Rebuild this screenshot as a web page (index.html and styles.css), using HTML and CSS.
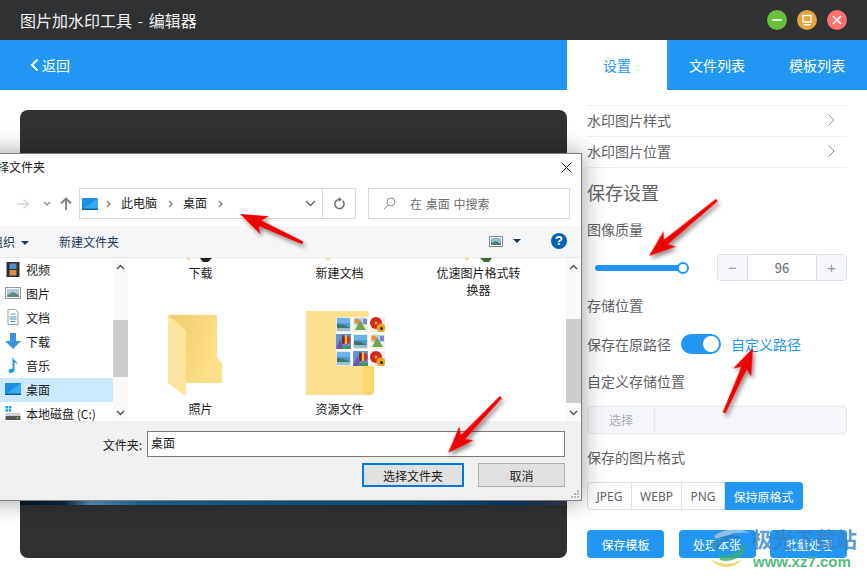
FILE: index.html
```html
<!DOCTYPE html>
<html lang="zh">
<head>
    <meta charset="utf-8">
    <title>图片加水印工具 - 编辑器</title>
    <link rel="stylesheet" href="styles.css">
</head>
<body>
    <svg class="defs" width="0" height="0">
        <defs>
            <linearGradient id="folder-back" x1="0" y1="0" x2="1" y2="0.4">
                <stop offset="0" stop-color="#efcb6c"/>
                <stop offset="1" stop-color="#fde08a"/>
            </linearGradient>
        </defs>
        <symbol id="pic-lake" viewBox="0 0 15 15">
            <rect width="15" height="15" fill="#e4e8ea"/>
            <rect x="1" y="1" width="13" height="13" fill="#4c9bd8"/>
            <rect x="1" y="1" width="13" height="5" fill="#6fb4e6"/>
            <path d="M1 7 L8 8 L14 11 V14 H1Z" fill="#3f7466"/>
            <rect x="1" y="11" width="13" height="3" fill="#9cc2cc"/>
        </symbol>
        <symbol id="pic-hill" viewBox="0 0 15 15">
            <rect width="15" height="15" fill="#f4f2d8"/>
            <rect x="1" y="1" width="13" height="7" fill="#a9d6ee"/>
            <path d="M2 13 L7 3 L13 13Z" fill="#6fa552"/>
            <circle cx="4" cy="4" r="2.5" fill="#ee8b2c"/>
            <rect x="10" y="2" width="4" height="5" fill="#8b7fd0"/>
        </symbol>
        <symbol id="pic-flower" viewBox="0 0 15 15">
            <rect width="15" height="15" fill="#f1efe6"/>
            <circle cx="6" cy="6" r="6" fill="#cf2b1c"/>
            <circle cx="6" cy="6" r="1.5" fill="#e8a33a"/>
            <circle cx="11" cy="11" r="4.5" fill="#f0a01e"/>
            <circle cx="11.5" cy="11.5" r="1.5" fill="#222"/>
        </symbol>
        <symbol id="pic-balloon" viewBox="0 0 15 15">
            <rect width="15" height="15" fill="#5e97d6"/>
            <circle cx="10" cy="6" r="4.5" fill="#c9332c"/>
            <rect x="9" y="1" width="2" height="9" fill="#f1c232"/>
            <rect x="6.5" y="1" width="1" height="9" fill="#222"/>
            <path d="M0 15 L4 5 L8 15Z" fill="#7a4fb5"/>
            <rect x="6" y="12" width="9" height="3" fill="#3c9a5f"/>
        </symbol>
    </svg>

    <div class="app">
        <div class="titlebar">
            <span class="app-title">图片加水印工具 - 编辑器</span>
            <div class="win-btns">
                <span class="win-btn win-min"><svg width="12" height="12" viewBox="0 0 12 12"><rect x="1" y="5" width="10" height="2" rx="1" fill="#fff" opacity=".85"/></svg></span>
                <span class="win-btn win-max"><svg width="12" height="12" viewBox="0 0 12 12"><rect x="2" y="1.5" width="8" height="6.5" fill="none" stroke="#fff" stroke-width="1.4"/><rect x="2.5" y="10" width="7" height="1.4" fill="#fff"/></svg></span>
                <span class="win-btn win-close"><svg width="12" height="12" viewBox="0 0 12 12"><path d="M2 2 L10 10 M10 2 L2 10" stroke="#fff" stroke-width="1.6"/></svg></span>
            </div>
        </div>

        <div class="topbar">
            <a class="back">
                <svg width="9" height="14" viewBox="0 0 9 14"><path d="M7.5 1.5 L2 7 L7.5 12.5" fill="none" stroke="#fff" stroke-width="2"/></svg>
                返回
            </a>
            <div class="tabs">
                <span class="tab tab-active">设置</span>
                <span class="tab">文件列表</span>
                <span class="tab">模板列表</span>
            </div>
        </div>

        <div class="main">
            <div class="canvas-wrap">
                <div class="canvas">
                    <div class="canvas-img"></div>
                </div>
            </div>

            <div class="panel">
                <div class="fold-row">水印图片样式
                    <svg width="7" height="12" viewBox="0 0 7 12"><path d="M.5 .5 L6 6 L.5 11.5" fill="none" stroke="#909399" stroke-width="1"/></svg>
                </div>
                <div class="fold-row">水印图片位置
                    <svg width="7" height="12" viewBox="0 0 7 12"><path d="M.5 .5 L6 6 L.5 11.5" fill="none" stroke="#909399" stroke-width="1"/></svg>
                </div>
                <div class="panel-title">保存设置</div>
                <div class="label label-quality">图像质量</div>
                <div class="quality-row">
                    <div class="slider"><span class="slider-dot"></span></div>
                    <div class="stepper">
                        <span class="step-btn step-left">−</span>
                        <span class="step-val">96</span>
                        <span class="step-btn step-right">+</span>
                    </div>
                </div>
                <div class="label label-store">存储位置</div>
                <div class="path-row">
                    <span class="label">保存在原路径</span>
                    <span class="toggle"><span class="toggle-dot"></span></span>
                    <span class="link">自定义路径</span>
                </div>
                <div class="label label-custom">自定义存储位置</div>
                <div class="pick-input">
                    <span class="pick-btn">选择</span>
                </div>
                <div class="label label-format">保存的图片格式</div>
                <div class="format-group">
                    <span class="fmt fmt-jpeg">JPEG</span>
                    <span class="fmt fmt-webp">WEBP</span>
                    <span class="fmt fmt-png">PNG</span>
                    <span class="fmt fmt-on">保持原格式</span>
                </div>
                <div class="action-row">
                    <span class="action">保存模板</span>
                    <span class="action">处理本张</span>
                    <span class="action">批量处理</span>
                </div>
            </div>
        </div>
    </div>

    <!-- 选择文件夹 dialog -->
    <div class="dialog">
        <div class="dlg-title">
            <span>选择文件夹</span>
            <svg width="11" height="11" viewBox="0 0 11 11"><path d="M.5 .5 L10.5 10.5 M10.5 .5 L.5 10.5" stroke="#111" stroke-width="1"/></svg>
        </div>
        <div class="dlg-nav">
            <svg class="nav-icon nav-fwd" width="14" height="12" viewBox="0 0 14 12"><path d="M1 6 H12 M7.5 1.5 L12.5 6 L7.5 10.5" fill="none" stroke="#d4d4d4" stroke-width="1.6"/></svg>
            <svg class="nav-icon nav-drop" width="8" height="6" viewBox="0 0 8 6"><path d="M1 1 L4 4 L7 1" fill="none" stroke="#8a8a8a" stroke-width="1.4"/></svg>
            <svg class="nav-icon nav-up" width="12" height="14" viewBox="0 0 12 14"><path d="M6 13 V2 M1 6.5 L6 1.5 L11 6.5" fill="none" stroke="#7d7d7d" stroke-width="1.8"/></svg>
            <div class="addr">
                <svg width="16" height="12" viewBox="0 0 16 12"><rect width="16" height="12" fill="#1b8fe6"/><path d="M0 12 L16 0 V12Z" fill="#39a9f2"/><rect y="10.5" width="16" height="1.5" fill="#0d5ea0"/></svg>
                <svg class="crumb-sep" width="5" height="8" viewBox="0 0 5 8"><path d="M1 1 L4 4 L1 7" fill="none" stroke="#777" stroke-width="1.3"/></svg>
                <span>此电脑</span>
                <svg class="crumb-sep" width="5" height="8" viewBox="0 0 5 8"><path d="M1 1 L4 4 L1 7" fill="none" stroke="#777" stroke-width="1.3"/></svg>
                <span>桌面</span>
                <svg class="crumb-sep" width="5" height="8" viewBox="0 0 5 8"><path d="M1 1 L4 4 L1 7" fill="none" stroke="#777" stroke-width="1.3"/></svg>
                <div class="addr-end">
                    <svg width="11" height="7" viewBox="0 0 11 7"><path d="M1 1 L5.5 5.5 L10 1" fill="none" stroke="#666" stroke-width="1.4"/></svg>
                    <span class="addr-refresh">
                        <svg width="12" height="13" viewBox="0 0 12 13"><path d="M9.6 3.6 A4.6 4.6 0 1 1 6 2.4" fill="none" stroke="#707070" stroke-width="1.5"/><path d="M5.6 0 L9 2.4 L5.6 4.8Z" fill="#707070"/></svg>
                    </span>
                </div>
            </div>
            <div class="search">
                <svg width="13" height="13" viewBox="0 0 13 13"><circle cx="8" cy="5" r="4" fill="none" stroke="#8a8a8a"/><path d="M5 8 L1 12" stroke="#b08a6a" stroke-width="1"/></svg>
                <span>在 桌面 中搜索</span>
            </div>
        </div>
        <div class="dlg-tools">
            <span class="tool-org">组织<i class="caret"></i></span>
            <span class="tool-new">新建文件夹</span>
            <svg class="tool-view" width="14" height="11" viewBox="0 0 14 11"><rect x=".5" y=".5" width="13" height="10" fill="#fff" stroke="#8b8b8b"/><rect x="2" y="2" width="10" height="7" fill="#8fc0d8"/><path d="M2 7 L7 5 L12 8 V9 H2Z" fill="#4f7f6c"/></svg>
            <i class="caret tool-caret"></i>
            <span class="help">?</span>
        </div>
        <div class="dlg-body">
            <ul class="side">
                <li class="side-item">
                    <svg width="15" height="15" viewBox="0 0 15 15"><rect x="1" width="13" height="15" fill="#2e2e2e"/><rect x="4" y="1.5" width="7" height="5.5" fill="#4f8fd0"/><rect x="4" y="8" width="7" height="5.5" fill="#d8923a"/></svg>
                    视频
                </li>
                <li class="side-item">
                    <svg width="16" height="12" viewBox="0 0 16 12"><rect x=".5" y=".5" width="15" height="11" fill="#fff" stroke="#9a9a9a"/><rect x="2" y="2" width="12" height="8" fill="#a8cfe0"/><path d="M2 8 L8 5 L14 8 V10 H2Z" fill="#5d8a76"/></svg>
                    图片
                </li>
                <li class="side-item">
                    <svg width="15" height="16" viewBox="0 0 15 16"><path d="M2.5 .5 H10 L12.5 3 V15.5 H2.5Z" fill="#fff" stroke="#a0a0a0"/><path d="M5 5 H10 M4 8 H11 M4 10 H11 M5 12.5 H10" stroke="#4a8fc8" stroke-width="1"/></svg>
                    文档
                </li>
                <li class="side-item">
                    <svg width="16" height="16" viewBox="0 0 16 16"><path d="M5 0 H11 V8 H16 L8 16 L0 8 H5Z" fill="#3a92e0"/></svg>
                    下载
                </li>
                <li class="side-item">
                    <svg width="15" height="16" viewBox="0 0 15 16"><path d="M7 0 C8 3 12 4 12 8 C11 6 10 5.5 9 5 V13 C9 15 7 16 5.5 16 C4 16 3 15 3 13.8 C3 12.3 4.8 11.3 7 11.8Z" fill="#1d9bea"/></svg>
                    音乐
                </li>
                <li class="side-item side-on">
                    <svg width="16" height="12" viewBox="0 0 16 12"><rect width="16" height="12" fill="#1b8fe6"/><path d="M0 12 L16 0 V12Z" fill="#39a9f2"/><rect y="10.5" width="16" height="1.5" fill="#0d5ea0"/></svg>
                    桌面
                </li>
                <li class="side-item">
                    <svg width="15" height="14" viewBox="0 0 15 14"><rect x="0" y="0" width="2.5" height="2.5" fill="#18a0e8"/><rect x="3.2" y="0" width="2.5" height="2.5" fill="#18a0e8"/><rect x="0" y="3.2" width="2.5" height="2.5" fill="#18a0e8"/><rect x="3.2" y="3.2" width="2.5" height="2.5" fill="#18a0e8"/><rect y="7" width="15" height="3" fill="#d0d0d0"/><rect y="10" width="15" height="4" fill="#555"/><rect x="11" y="11" width="2" height="1.5" fill="#6fd04a"/></svg>
                    本地磁盘 (C:)
                </li>
            </ul>
            <div class="scrollbar scrollbar-side">
                <svg width="9" height="6" viewBox="0 0 9 6"><path d="M1 5 L4.5 1.5 L8 5" fill="none" stroke="#555" stroke-width="1.5"/></svg>
                <div class="scroll-track"><span class="scroll-thumb"></span></div>
                <svg width="9" height="6" viewBox="0 0 9 6"><path d="M1 1 L4.5 4.5 L8 1" fill="none" stroke="#555" stroke-width="1.5"/></svg>
            </div>
            <div class="files">
                <div class="tile">
                    <div class="stub"><svg width="30" height="5" viewBox="0 0 30 5"><path d="M0 0 H5 L3 3Z" fill="#f6dc90"/><path d="M14 0 H26 L22 4 H17Z" fill="#222"/></svg></div>
                    <div class="tile-name">下载</div>
                </div>
                <div class="tile">
                    <div class="stub"><svg width="30" height="5" viewBox="0 0 30 5"><path d="M0 0 H6 L3 3Z" fill="#f6dc90"/></svg></div>
                    <div class="tile-name">新建文档</div>
                </div>
                <div class="tile">
                    <div class="stub"><svg width="30" height="5" viewBox="0 0 30 5"><path d="M0 0 H6 L3 3Z" fill="#f6dc90"/><path d="M16 0 H28 L25 4 H20Z" fill="#3f6b34"/></svg></div>
                    <div class="tile-name">优速图片格式转换器</div>
                </div>
                <div class="tile tile-big">
                    <svg class="tile-icon" width="54" height="82" viewBox="0 0 54 82">
                        <path d="M0 0 H49 V43 L54 48 V68 H18 V30Z" fill="url(#folder-back)"/>
                        <path d="M0 0 L18 15 V81 L0 68Z" fill="#fde49c"/>
                    </svg>
                    <div class="tile-name">照片</div>
                </div>
                <div class="tile tile-big">
                    <div class="album">
                        <svg width="68" height="84" viewBox="0 0 68 84">
                            <path d="M0 0 H60 Q63 0 63 3 V55 H68 V80 Q68 84 64 84 H0Z" fill="#fde08e"/>
                            <path d="M57 56 Q57 53 61 53 H64 Q68 53 68 58 V80 Q68 84 64 84 H57Z" fill="#fbd56e"/>
                        </svg>
                        <div class="thumbs">
                            <svg width="15" height="15"><use href="#pic-lake"/></svg>
                            <svg width="15" height="15"><use href="#pic-hill"/></svg>
                            <svg width="15" height="15"><use href="#pic-flower"/></svg>
                            <svg width="15" height="15"><use href="#pic-balloon"/></svg>
                            <svg width="15" height="15"><use href="#pic-lake"/></svg>
                            <svg width="15" height="15"><use href="#pic-hill"/></svg>
                            <svg width="15" height="15"><use href="#pic-lake"/></svg>
                            <svg width="15" height="15"><use href="#pic-balloon"/></svg>
                            <svg width="15" height="15"><use href="#pic-flower"/></svg>
                        </div>
                    </div>
                    <div class="tile-name">资源文件</div>
                </div>
            </div>
            <div class="scrollbar scrollbar-main">
                <svg width="9" height="6" viewBox="0 0 9 6"><path d="M1 5 L4.5 1.5 L8 5" fill="none" stroke="#555" stroke-width="1.5"/></svg>
                <div class="scroll-track"><span class="scroll-thumb"></span></div>
                <svg width="9" height="6" viewBox="0 0 9 6"><path d="M1 1 L4.5 4.5 L8 1" fill="none" stroke="#555" stroke-width="1.5"/></svg>
            </div>
        </div>
        <div class="dlg-foot">
            <div class="foot-row">
                <span class="foot-label">文件夹:</span>
                <div class="foot-input">桌面</div>
            </div>
            <div class="foot-btns">
                <span class="sys-btn sys-primary">选择文件夹</span>
                <span class="sys-btn">取消</span>
            </div>
        </div>
        <svg class="grip" width="9" height="9" viewBox="0 0 9 9"><g fill="#b5b5b5"><rect x="6" y="0" width="2" height="2"/><rect x="3" y="3" width="2" height="2"/><rect x="6" y="3" width="2" height="2"/><rect x="0" y="6" width="2" height="2"/><rect x="3" y="6" width="2" height="2"/><rect x="6" y="6" width="2" height="2"/></g></svg>
    </div>

    <!-- 水印 -->
    <div class="watermark">
        <svg class="wm-logo" width="48" height="40" viewBox="0 0 48 40">
            <path d="M6 8 C16 0 34 0 42 5 C30 3 18 6 11 14Z" fill="#d8dde0" opacity=".6"/>
            <path d="M2 18 C6 8 24 4 34 10 C22 9 12 14 9 24Z" fill="#1f7fc4" opacity=".8"/>
            <path d="M10 26 C20 30 32 26 37 14 C40 26 26 36 12 32Z" fill="#3fae6a" opacity=".8"/>
            <path d="M3 31 C14 38 26 37 34 31 C28 41 10 42 3 31Z" fill="#e5d55a" opacity=".85"/>
        </svg>
        <div class="wm-name">极光下载站</div>
        <div class="wm-url">www.xz7.com</div>
    </div>

    <!-- 标注箭头 -->
    <svg class="marks" width="867" height="578" viewBox="0 0 867 578">
        <defs>
            <filter id="arrow-shadow" x="-30%" y="-30%" width="160%" height="160%">
                <feDropShadow dx="2" dy="3" stdDeviation="2" flood-color="#000" flood-opacity=".45"/>
            </filter>
        </defs>
        <g fill="#f00000" filter="url(#arrow-shadow)">
            <path transform="translate(240 214) rotate(24.7)" d="M0 0 L27 -10 L22 -3 L69 -1.5 L69 1.5 L22 3 L27 10Z"/>
            <path transform="translate(649 256) rotate(-39.5)" d="M0 0 L27 -10 L22 -3 L88 -1.5 L88 1.5 L22 3 L27 10Z"/>
            <path transform="translate(753 348) rotate(114)" d="M0 0 L27 -10 L22 -3 L71 -1.5 L71 1.5 L22 3 L27 10Z"/>
            <path transform="translate(448 453) rotate(-46.6)" d="M0 0 L27 -10 L22 -3 L77 -1.5 L77 1.5 L22 3 L27 10Z"/>
        </g>
    </svg>
</body>
</html>
```

FILE: styles.css
```css
* { box-sizing: border-box; }
html, body { margin: 0; padding: 0; }
body { width: 867px; height: 578px; overflow: hidden; position: relative; background: #fff; font-family: "Noto Sans CJK SC", "Liberation Sans", sans-serif; color: #606266; }
.defs { position: absolute; }

/* app shell */
.app { display: flex; flex-direction: column; height: 578px; }
.titlebar { flex: none; height: 40px; background: #303133; display: flex; align-items: center; justify-content: space-between; padding: 0 20px; }
.app-title { color: #f2f2f2; font-size: 16px; word-spacing: 2px; }
.win-btns { display: flex; gap: 10px; }
.win-btn { width: 20px; height: 20px; border-radius: 50%; display: flex; align-items: center; justify-content: center; }
.win-min { background: #67c23a; }
.win-max { background: #e6a23c; }
.win-close { background: #ff7070; }

.topbar { flex: none; height: 50px; background: #2196f3; display: flex; justify-content: space-between; }
.back { display: flex; align-items: center; gap: 3px; padding-left: 30px; color: #fff; font-size: 14px; }
.tabs { display: flex; }
.tab { width: 100px; display: flex; align-items: center; justify-content: center; color: #fff; font-size: 14px; }
.tab-active { background: #fff; color: #2196f3; }

.main { flex: 1; display: flex; min-height: 0; }
.canvas-wrap { width: 567px; padding: 20px 0 20px 20px; }
.canvas { height: 448px; background: #303133; border-radius: 8px; padding: 60px 0 53px 0; }
.canvas-img { height: 100%; background: linear-gradient(90deg, #06192c, #0a2a48 8%, #5f9cc8 13%, #1f74a8 22%, #0f5f98 50%, #0b5c94 72%, #0a3f6e 90%, #3a3a55 100%); }

/* right panel */
.panel { width: 300px; padding: 15px 20px 0; font-size: 14px; }
.fold-row { height: 31px; border-top: 1px solid #ebeef5; display: flex; align-items: center; justify-content: space-between; padding: 0 12px 2px 0; }
.fold-row + .fold-row { border-bottom: 1px solid #ebeef5; height: 32px; }
.panel-title { font-size: 18px; line-height: 26px; margin-top: 11px; }
.label { font-size: 14px; line-height: 20px; }
.label-quality { margin-top: 14px; }
.quality-row { display: flex; align-items: center; justify-content: space-between; margin-top: 15px; height: 27px; padding-left: 8px; }
.slider { width: 88px; height: 6px; background: #2196f3; border-radius: 3px; position: relative; }
.slider-dot { position: absolute; right: -6px; top: -3px; width: 12px; height: 12px; border-radius: 50%; background: #fff; border: 2px solid #2196f3; }
.stepper { width: 130px; height: 27px; border: 1px solid #dcdfe6; border-radius: 4px; display: flex; }
.step-btn { width: 30px; background: #f5f7fa; color: #909399; display: flex; align-items: center; justify-content: center; font: 15px "Liberation Sans", sans-serif; }
.step-left { border-right: 1px solid #dcdfe6; border-radius: 3px 0 0 3px; }
.step-right { border-left: 1px solid #dcdfe6; border-radius: 0 3px 3px 0; }
.step-val { flex: 1; text-align: center; line-height: 25px; font-size: 13px; }
.label-store { margin-top: 14px; }
.path-row { display: flex; align-items: center; height: 20px; margin-top: 19px; }
.toggle { width: 40px; height: 20px; border-radius: 10px; background: #2196f3; margin-left: 10px; position: relative; }
.toggle-dot { position: absolute; right: 2px; top: 2px; width: 16px; height: 16px; border-radius: 50%; background: #fff; }
.link { color: #2196f3; margin-left: 10px; font-size: 14px; line-height: 20px; }
.label-custom { margin-top: 17px; }
.pick-input { height: 28px; margin-top: 15px; background: #f5f7fa; border: 1px solid #e4e7ed; border-radius: 4px; }
.pick-btn { display: block; width: 67px; height: 26px; line-height: 26px; text-align: center; color: #a8abb2; font-size: 12px; border-right: 1px solid #e4e7ed; }
.label-format { margin-top: 13px; }
.format-group { display: flex; height: 28px; margin-top: 15px; }
.fmt { display: flex; align-items: center; justify-content: center; font-size: 12px; border: 1px solid #dcdfe6; border-left: none; font-family: "Noto Sans", "Liberation Sans", sans-serif; }
.fmt-jpeg { width: 45px; border-left: 1px solid #dcdfe6; border-radius: 4px 0 0 4px; }
.fmt-webp { width: 50px; }
.fmt-png { width: 43px; }
.fmt-on { width: 78px; background: #2196f3; border-color: #2196f3; color: #fff; border-radius: 0 4px 4px 0; font-family: "Noto Sans CJK SC", sans-serif; }
.action-row { display: flex; justify-content: space-between; margin-top: 20px; }
.action { width: 77px; height: 28px; background: #2196f3; color: #fff; font-size: 12px; border-radius: 4px; display: flex; align-items: center; justify-content: center; }

/* file dialog */
.dialog { position: absolute; left: -24px; top: 153px; width: 606px; height: 348px; background: #fff; border: 1px solid #7f7f7f; box-shadow: 0 0 22px rgba(0,0,0,.4); font-size: 12px; color: #1a1a1a; display: flex; flex-direction: column; }
.dlg-title { flex: none; height: 28px; display: flex; align-items: center; justify-content: space-between; padding: 0 9px 2px 8px; line-height: 26px; }
.dlg-nav { flex: none; height: 44px; padding: 6px 11px 0 39px; display: flex; align-items: flex-start; }
.nav-icon { flex: none; align-self: flex-start; }
.nav-fwd { margin-top: 10px; }
.nav-drop { margin: 13px 0 0 13px; }
.nav-up { margin: 9px 0 0 9px; }
.addr { width: 277px; height: 31px; margin-left: 7px; border: 1px solid #d9d9d9; display: flex; align-items: center; padding-left: 2px; }
.addr > span { margin: 0 11px 2px 10px; }
.crumb-sep { flex: none; margin-left: 8px; }
.crumb-sep:first-of-type { margin-left: 7px; }
.addr > span + .crumb-sep { margin-left: 0; }
.addr-end { margin-left: auto; display: flex; align-items: center; height: 100%; }
.addr-refresh { width: 33px; height: 100%; margin-left: 6px; border-left: 1px solid #d9d9d9; display: flex; align-items: center; justify-content: center; }
.search { width: 202px; height: 31px; margin-left: 12px; border: 1px solid #d9d9d9; display: flex; align-items: center; gap: 14px; padding-left: 14px; color: #6d6d6d; word-spacing: 1px; }
.dlg-tools { flex: none; height: 32px; background: #f5f6f7; display: flex; align-items: center; color: #1e395b; border-bottom: 1px solid #eaeaea; position: relative; }
.tool-org { position: absolute; left: 14px; }
.caret { display: inline-block; width: 0; height: 0; border: 4px solid transparent; border-top: 4px solid #1e395b; border-bottom: 0; margin-left: 6px; vertical-align: 2px; }
.tool-new { position: absolute; left: 82px; }
.tool-view { position: absolute; left: 512px; top: 10px; }
.tool-caret { position: absolute; left: 536px; top: 13px; margin: 0; }
.help { position: absolute; left: 574px; top: 7px; width: 16px; height: 16px; border-radius: 50%; background: #0a62b8; color: #fff; font: bold 13px/16px "Liberation Sans", sans-serif; text-align: center; }
.dlg-body { flex: none; height: 163px; display: flex; overflow: hidden; }
.side { list-style: none; margin: 0; padding: 0 0 0 28px; width: 136px; flex: none; background: #fff; }
.side-item { height: 24px; display: flex; align-items: center; gap: 5px; white-space: nowrap; padding-bottom: 2px; }
.side-item svg { flex: none; width: 16px; }
.side-on { background: #cce8ff; margin-left: -28px; padding-left: 28px; }
.scrollbar { flex: none; width: 15px; background: #fafafa; display: flex; flex-direction: column; align-items: center; justify-content: space-between; padding: 6px 0 5px; }
.scroll-track { flex: 1; width: 100%; margin: 5px 0; position: relative; }
.scroll-thumb { position: absolute; left: 0; right: 0; background: #cdcdcd; }
.scrollbar-side .scroll-thumb { top: 45px; height: 57px; }
.scrollbar-main .scroll-thumb { top: 44px; height: 84px; }
.files { flex: none; width: 435px; margin-left: 3px; display: grid; grid-template-columns: 139px 139px 139px; grid-auto-rows: min-content; align-content: start; overflow: hidden; }
.tile { text-align: center; line-height: 17px; height: 53px; }
.stub { height: 6px; overflow: hidden; line-height: 0; }
.tile-name { padding: 0 27px; }
.tile-big { height: 110px; }
.tile-icon { display: block; margin: 4px 0 0 37px; }
.tile-big .tile-name { margin-top: 3px; }
.album { position: relative; width: 68px; height: 84px; margin: 0 auto; line-height: 0; }
.thumbs { position: absolute; left: 30px; top: 6px; width: 49px; display: grid; grid-template-columns: repeat(3, 15px); gap: 2px; background: #fff; }
.tile-big .album + .tile-name { margin-top: 5px; }
.dlg-foot { flex: 1; background: #f0f0f0; border-top: 1px solid #f0f0f0; padding: 9px 16px 0 0; }
.foot-row { display: flex; justify-content: flex-end; align-items: center; height: 26px; }
.foot-label { margin-right: 5px; }
.foot-input { width: 418px; height: 26px; border: 1px solid #7a7a7a; background: #fff; padding-left: 3px; line-height: 22px; font-size: 12px; }
.foot-btns { display: flex; justify-content: flex-end; gap: 14px; margin-top: 6px; }
.sys-btn { width: 87px; height: 24px; background: #e1e1e1; border: 1px solid #adadad; display: flex; align-items: center; justify-content: center; }
.sys-primary { width: 102px; border: 2px solid #0078d7; }
.grip { position: absolute; right: 1px; bottom: 1px; }

/* watermark + annotations */
.watermark { position: absolute; left: 700px; top: 525px; width: 165px; height: 50px; pointer-events: none; }
.wm-logo { position: absolute; left: 8px; top: 3px; }
.wm-name { position: absolute; left: 52px; top: 0; font-size: 21px; line-height: 27px; font-weight: 700; color: #3a82c6; opacity: .8; white-space: nowrap; }
.wm-url { position: absolute; left: 53px; top: 27px; font: bold 15px/20px "Liberation Sans", sans-serif; color: #55bb80; white-space: nowrap; }
.marks { position: absolute; left: 0; top: 0; pointer-events: none; }
```
